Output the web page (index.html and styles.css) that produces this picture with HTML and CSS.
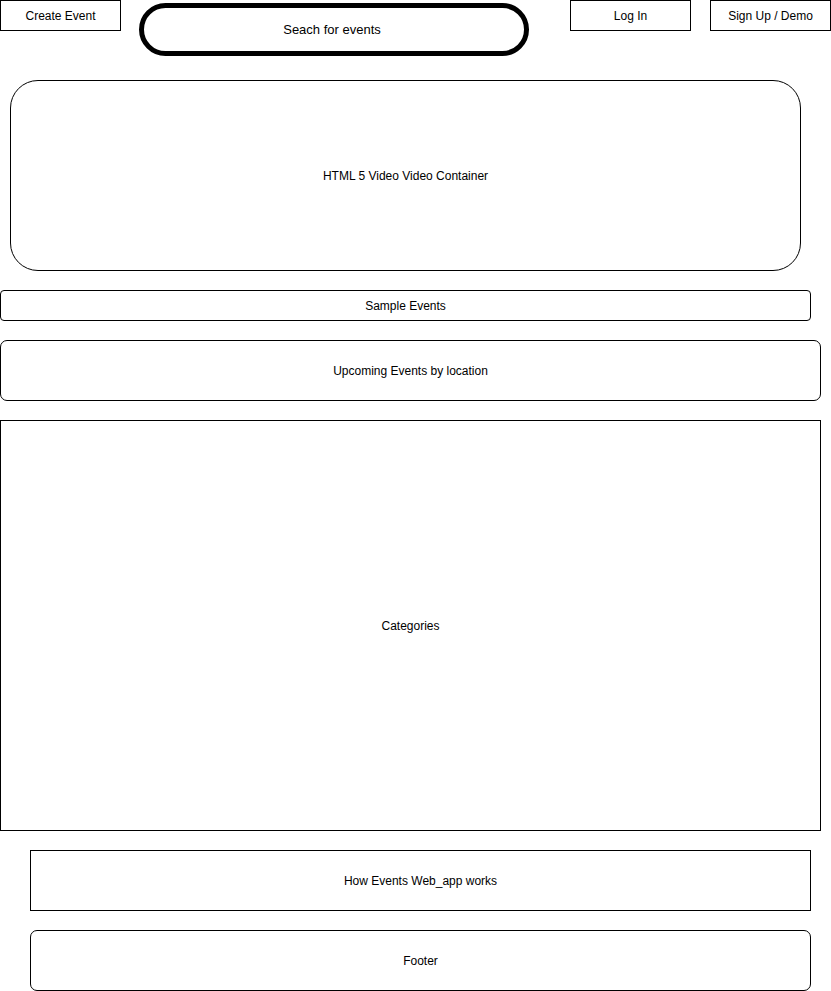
FILE: index.html
```html
<!DOCTYPE html>
<html>
<head>
<meta charset="utf-8">
<link rel="stylesheet" href="styles.css">
</head>
<body>
<div class="page">
  <header class="topbar">
    <div class="btn">Create Event</div>
    <div class="search">Seach for events</div>
    <div class="right">
      <div class="btn">Log In</div>
      <div class="btn">Sign Up / Demo</div>
    </div>
  </header>
  <section class="box video">HTML 5 Video Video Container</section>
  <section class="box sample">Sample Events</section>
  <section class="box upcoming">Upcoming Events by location</section>
  <section class="box categories">Categories</section>
  <section class="box how">How Events Web_app works</section>
  <footer class="box footer">Footer</footer>
</div>
</body>
</html>
```
FILE: styles.css
```css
* { box-sizing: border-box; }
html, body { margin: 0; padding: 0; background: #fff; }
body {
  font-family: "Liberation Sans", Arial, Helvetica, sans-serif;
  font-size: 12px;
  color: #000;
}
.page {
  width: 831px;
  display: flex;
  flex-direction: column;
  align-items: flex-start;
}
.topbar {
  display: flex;
  align-items: flex-start;
  width: 831px;
  height: 56px;
}
.btn {
  width: 121px;
  height: 31px;
  border: 1px solid #000;
  display: flex;
  align-items: center;
  justify-content: center;
  padding-top: 1px;
}
.search {
  margin-left: 18px;
  margin-top: 3px;
  width: 390px;
  height: 53px;
  border: 5px solid #000;
  border-radius: 27px;
  display: flex;
  align-items: center;
  justify-content: center;
  font-size: 13px;
  padding-right: 4px;
}
.right {
  margin-left: auto;
  display: flex;
  gap: 19px;
}
.box {
  border: 1px solid #000;
  display: flex;
  align-items: center;
  justify-content: center;
}
.video {
  margin-top: 24px;
  margin-left: 10px;
  width: 791px;
  height: 191px;
  border-radius: 28px;
  padding-top: 1px;
}
.sample {
  margin-top: 19px;
  width: 811px;
  height: 31px;
  border-radius: 4px;
}
.upcoming {
  margin-top: 19px;
  width: 821px;
  height: 61px;
  border-radius: 7px;
}
.categories {
  margin-top: 19px;
  width: 821px;
  height: 411px;
}
.how {
  margin-top: 19px;
  margin-left: 30px;
  width: 781px;
  height: 61px;
}
.footer {
  margin-top: 19px;
  margin-left: 30px;
  width: 781px;
  height: 61px;
  border-radius: 7px;
}
```
